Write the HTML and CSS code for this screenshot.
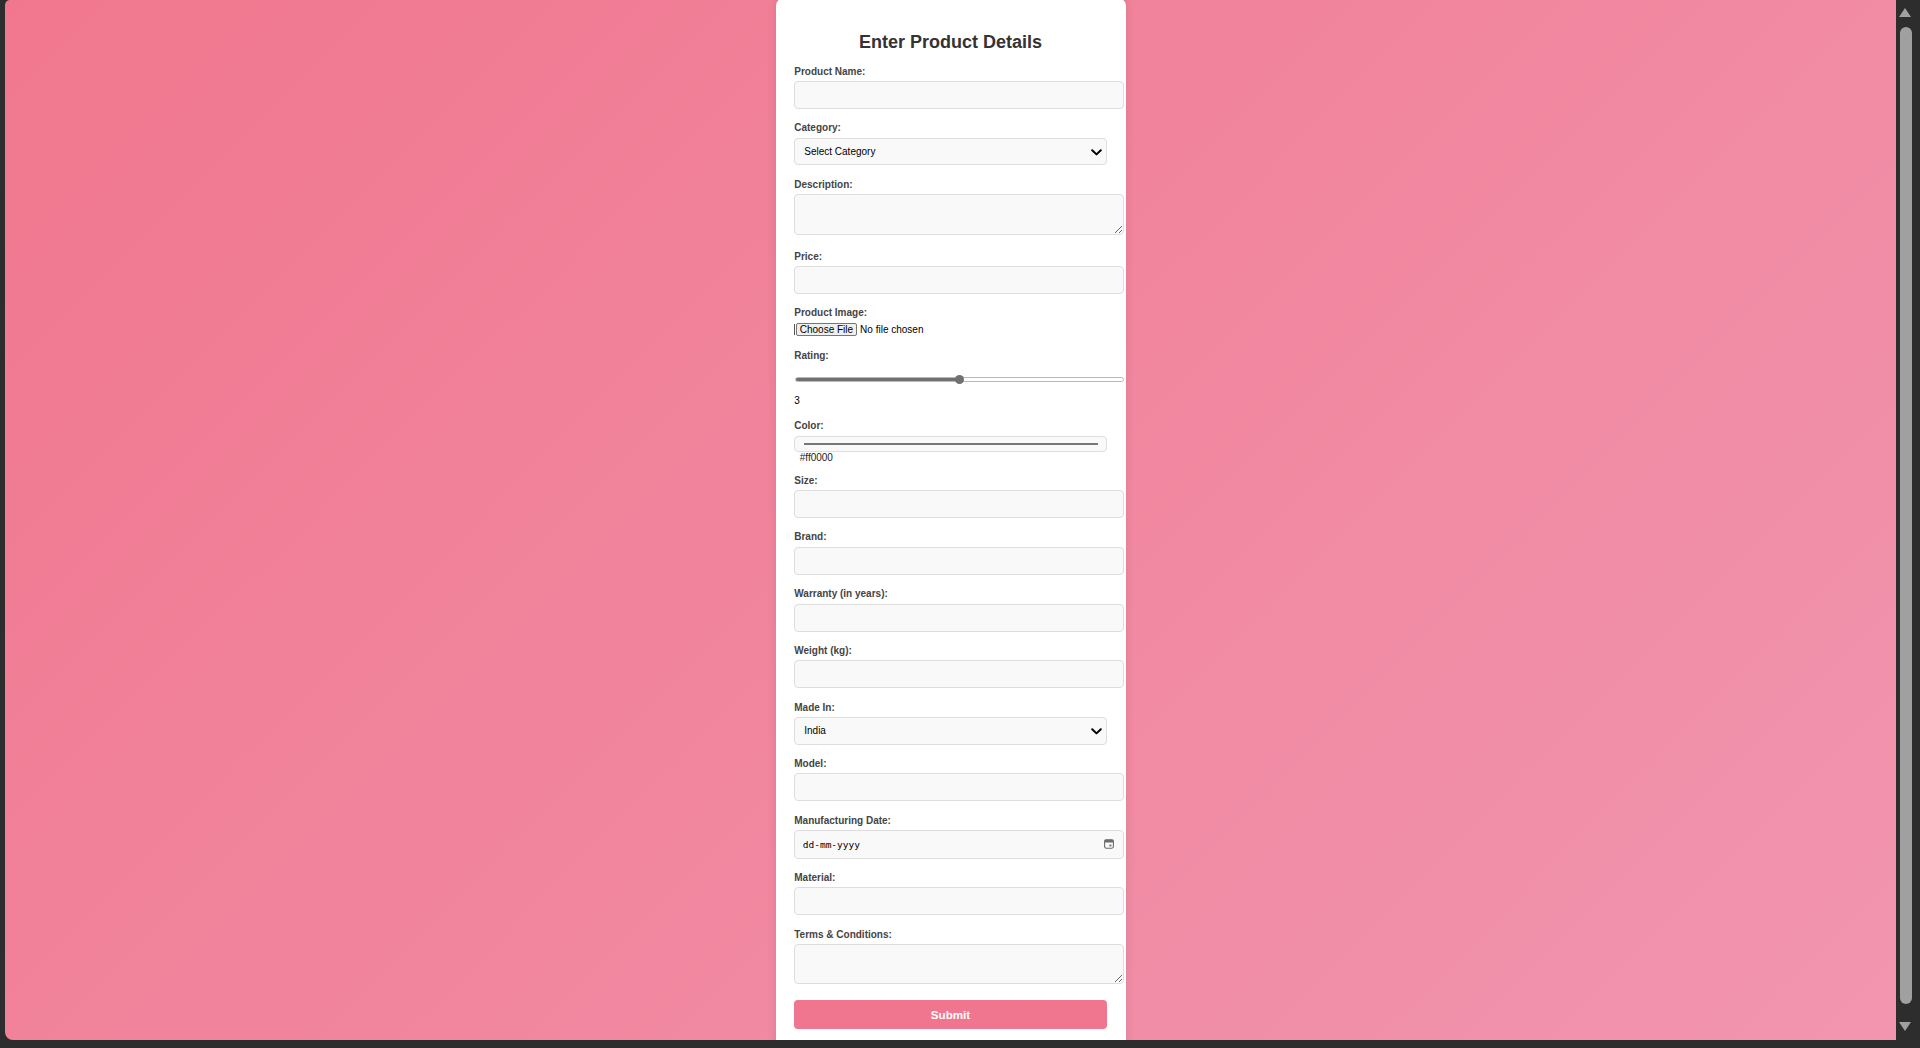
FILE: index.html
```html
<!DOCTYPE html>
<html lang="en">
<head>
<meta charset="utf-8">
<title>Enter Product Details</title>
<link rel="stylesheet" href="styles.css">
</head>
<body>
<div class="window">
  <main class="viewport">
    <div class="card">
      <h2 class="title">Enter Product Details</h2>
      <form class="form">
        <label class="label" for="name">Product Name:</label>
        <input class="field" id="name" type="text">

        <label class="label" for="category">Category:</label>
        <div class="select-wrap">
          <select class="select" id="category">
            <option>Select Category</option>
            <option>Electronics</option>
            <option>Clothing</option>
            <option>Home</option>
          </select>
          <svg class="chevron" viewBox="0 0 11 7" aria-hidden="true"><path d="M1.2 1.2 L5.5 5.4 L9.8 1.2" fill="none" stroke="#000" stroke-width="2" stroke-linecap="round" stroke-linejoin="round"/></svg>
        </div>

        <label class="label" for="description">Description:</label>
        <textarea class="field textarea" id="description"></textarea>

        <label class="label" for="price">Price:</label>
        <input class="field" id="price" type="number">

        <label class="label" for="image">Product Image:</label>
        <div class="file-wrap">
          <input class="file" id="image" type="file">
        </div>

        <label class="label" for="rating">Rating:</label>
        <input class="range" id="rating" type="range" min="1" max="5" value="3">
        <div class="range-value">3</div>

        <label class="label" for="color">Color:</label>
        <input class="color" id="color" type="color" value="#ff0000">
        <div class="color-value">#ff0000</div>

        <label class="label" for="size">Size:</label>
        <input class="field" id="size" type="text">

        <label class="label" for="brand">Brand:</label>
        <input class="field" id="brand" type="text">

        <label class="label" for="warranty">Warranty (in years):</label>
        <input class="field" id="warranty" type="number">

        <label class="label" for="weight">Weight (kg):</label>
        <input class="field" id="weight" type="number">

        <label class="label" for="madein">Made In:</label>
        <div class="select-wrap">
          <select class="select" id="madein">
            <option>India</option>
            <option>USA</option>
            <option>China</option>
          </select>
          <svg class="chevron" viewBox="0 0 11 7" aria-hidden="true"><path d="M1.2 1.2 L5.5 5.4 L9.8 1.2" fill="none" stroke="#000" stroke-width="2" stroke-linecap="round" stroke-linejoin="round"/></svg>
        </div>

        <label class="label" for="model">Model:</label>
        <input class="field" id="model" type="text">

        <label class="label" for="mdate">Manufacturing Date:</label>
        <div class="date" id="mdate">
          <span class="date-text">dd-mm-yyyy</span>
          <svg class="calendar" viewBox="0 0 10 10" aria-hidden="true">
            <rect x="0.6" y="0.8" width="8.8" height="8.4" rx="1.6" fill="none" stroke="#6b6b6b" stroke-width="1.1"/>
            <rect x="0.6" y="0.8" width="8.8" height="2.6" rx="1.2" fill="#6b6b6b"/>
            <rect x="5.4" y="5.6" width="2" height="1.8" fill="#6b6b6b"/>
          </svg>
        </div>

        <label class="label" for="material">Material:</label>
        <input class="field" id="material" type="text">

        <label class="label" for="terms">Terms &amp; Conditions:</label>
        <textarea class="field textarea" id="terms"></textarea>

        <button class="submit" type="submit">Submit</button>
      </form>
    </div>
  </main>
  <div class="scrollbar" aria-hidden="true">
    <div class="sb-up"></div>
    <div class="sb-thumb"></div>
    <div class="sb-down"></div>
  </div>
</div>
</body>
</html>
```

FILE: styles.css
```css
html, body {
  margin: 0;
  height: 100%;
  overflow: hidden;
  background: #2d2d2d;
  font-family: "Liberation Sans", Arial, sans-serif;
}

.window {
  display: flex;
  height: 1048px;
  padding-left: 5px;
  box-sizing: border-box;
}

.viewport {
  flex: 1;
  height: 1040px;
  border-radius: 5px 0 0 8px;
  overflow: hidden;
  background: linear-gradient(135deg, #f0778e 0%, #f295af 100%);
  display: flex;
  justify-content: center;
  align-items: flex-start;
}

.card {
  flex: none;
  width: 350px;
  box-sizing: border-box;
  margin-top: -2px;
  padding: 18.75px;
  background: #fff;
  border-radius: 8px;
  box-shadow: 0 0 10px rgba(0, 0, 0, 0.1);
}

.title {
  margin: 15px 0 13.2px;
  font-size: 18px;
  line-height: 20.7px;
  font-weight: bold;
  text-align: center;
  color: #333;
}

.form {
  margin: 0;
}

.label {
  display: block;
  font-size: 10px;
  line-height: 11.5px;
  font-weight: bold;
  color: #444;
  margin-bottom: 4px;
}

.field {
  display: block;
  box-sizing: content-box;
  width: 100%;
  padding: 7.5px;
  margin: 0 0 13.25px;
  border: 1px solid #ddd;
  border-radius: 4px;
  background: #f9f9f9;
  font-family: "Liberation Sans", Arial, sans-serif;
  font-size: 10px;
  line-height: 11px;
  color: #000;
  outline: none;
}

.textarea {
  height: 23.4px;
  margin-bottom: 16px;
}

.select-wrap {
  position: relative;
  margin-bottom: 13.25px;
}

.select {
  display: block;
  -webkit-appearance: none;
  appearance: none;
  box-sizing: border-box;
  width: 100%;
  height: 27.5px;
  margin: 0;
  padding: 0 9px;
  border: 1px solid #ddd;
  border-radius: 4px;
  background: #f9f9f9;
  font-family: "Liberation Sans", Arial, sans-serif;
  font-size: 10px;
  color: #000;
}

.chevron {
  position: absolute;
  right: 5px;
  top: 50%;
  width: 11px;
  height: 7px;
  margin-top: -3px;
  pointer-events: none;
}

.file-wrap {
  display: flex;
  align-items: center;
  height: 14px;
  margin-bottom: 13px;
}

.file-wrap::before {
  content: "";
  flex: none;
  width: 1px;
  height: 11px;
  background: #555;
}

.file {
  margin: 0;
  padding: 0;
  border: none;
  font-family: "Liberation Sans", Arial, sans-serif;
  font-size: 10px;
  color: #000;
}

.file::file-selector-button {
  height: 13px;
  margin: 0 3px 0 0.5px;
  padding: 0 3px;
  border: 1px solid #767676;
  border-radius: 2px;
  background: #efefef;
  font-family: inherit;
  font-size: 10px;
  line-height: 11px;
  color: #000;
}

.range {
  display: block;
  -webkit-appearance: none;
  appearance: none;
  width: calc(100% + 16px);
  height: 28.5px;
  margin: 0 0 0 1px;
  padding: 0;
  background: transparent;
}

.range::-webkit-slider-runnable-track {
  box-sizing: border-box;
  height: 5px;
  border-radius: 3px;
  border: 1px solid #b9b9b9;
  background: linear-gradient(to right, #707070 50%, #fff 50%);
}

.range::-webkit-slider-thumb {
  -webkit-appearance: none;
  appearance: none;
  width: 9px;
  height: 9px;
  margin-top: -3px;
  border: none;
  border-radius: 50%;
  background: #707070;
}

.range-value {
  margin: 1.5px 0 13.5px;
  font-size: 10px;
  line-height: 11.5px;
  color: #000;
}

.color {
  display: block;
  box-sizing: border-box;
  width: 100%;
  height: 16px;
  margin: 0;
  padding: 6px 8.25px;
  border: 1px solid #ddd;
  border-radius: 4px;
  background: #f9f9f9;
}

.color::-webkit-color-swatch-wrapper {
  padding: 0;
}

.color::-webkit-color-swatch {
  border: 1px solid #777;
  border-radius: 0;
}

.color-value {
  margin: 0 0 11.3px 5.5px;
  font-size: 10px;
  line-height: 11.5px;
  color: #222;
}

.date {
  display: flex;
  align-items: center;
  justify-content: space-between;
  box-sizing: border-box;
  width: calc(100% + 17px);
  height: 28.5px;
  margin-bottom: 13.25px;
  padding: 0 9.25px 0 7.5px;
  border: 1px solid #ddd;
  border-radius: 4px;
  background: #f9f9f9;
}

.date-text {
  font-family: "DejaVu Sans Mono", "Liberation Mono", monospace;
  font-size: 9.5px;
  color: #000;
}

.calendar {
  width: 10px;
  height: 10px;
  flex: none;
}

.submit {
  display: block;
  width: 100%;
  height: 28.7px;
  margin: 0;
  padding: 0;
  border: none;
  border-radius: 4px;
  background: #f0768f;
  color: #fff;
  font-family: "Liberation Sans", Arial, sans-serif;
  font-size: 11.6px;
  font-weight: bold;
}

.scrollbar {
  flex: none;
  width: 24px;
  display: flex;
  flex-direction: column;
  padding-top: 8px;
  box-sizing: border-box;
}

.sb-up {
  width: 0;
  height: 0;
  margin-left: 3px;
  border-left: 6px solid transparent;
  border-right: 6px solid transparent;
  border-bottom: 9px solid #a0a0a0;
}

.sb-thumb {
  width: 12px;
  height: 977px;
  margin: 10px 0 0 4px;
  border-radius: 6px;
  background: #a0a0a0;
}

.sb-down {
  width: 0;
  height: 0;
  margin: 18px 0 0 3px;
  border-left: 6px solid transparent;
  border-right: 6px solid transparent;
  border-top: 9px solid #a0a0a0;
}
```
